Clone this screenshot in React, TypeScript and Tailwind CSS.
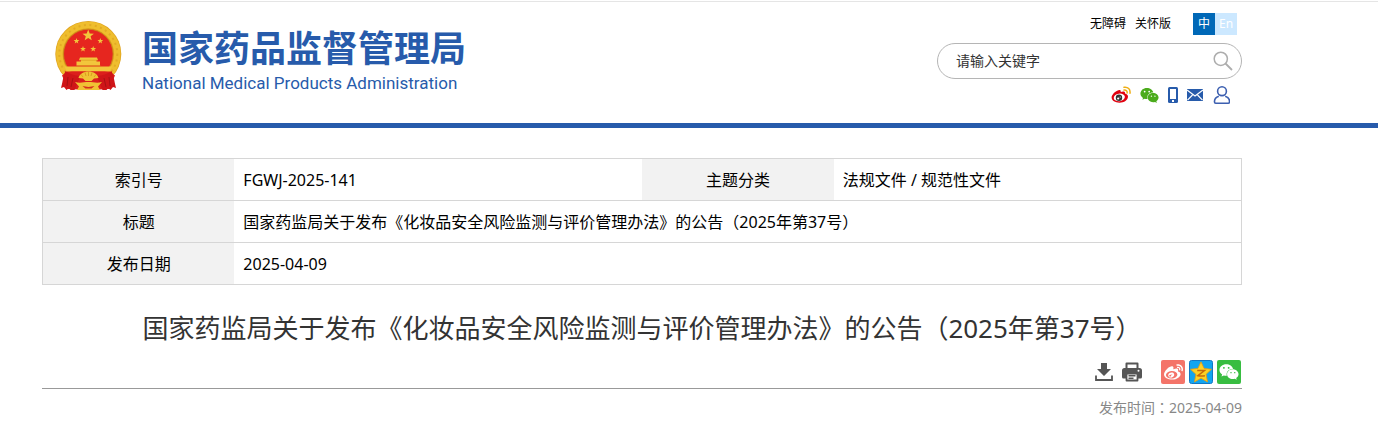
import { useState } from "react";
import { FaWeibo, FaWeixin } from "react-icons/fa";

const TITLE = "国家药监局关于发布《化妆品安全风险监测与评价管理办法》的公告（2025年第37号）";

function Star({ cx, cy, r }: { cx: number; cy: number; r: number }) {
  const points = Array.from({ length: 10 }, (_, i) => {
    const a = (Math.PI / 5) * i - Math.PI / 2;
    const d = i % 2 === 0 ? r : r * 0.42;
    return `${cx + d * Math.cos(a)},${cy + d * Math.sin(a)}`;
  }).join(" ");
  return <polygon points={points} />;
}

function Emblem() {
  return (
    <svg width="67" height="70" viewBox="0 0 67 70" className="shrink-0" aria-hidden="true">
      <circle cx="33.3" cy="33" r="33" fill="#dfa31f" />
      <circle cx="33.3" cy="33" r="29" fill="none" stroke="#efbe2e" strokeWidth="6.500" />
      <circle cx="33.3" cy="33" r="29" fill="none" stroke="#e3ab25" strokeWidth="2" strokeDasharray="2 3.500" />
      <circle cx="33.3" cy="33" r="24.800" fill="#e6261f" stroke="#c98a16" strokeWidth="0.800" />
      <g fill="#f2c63c">
        <Star cx={33.2} cy={14.5} r={6} />
        <Star cx={21.5} cy={20} r={3} />
        <Star cx={45.3} cy={20} r={3} />
        <Star cx={28} cy={28} r={3} />
        <Star cx={38.2} cy={28} r={3} />
        <path d="M25 36.500h17l1 2.500h-1.500v1.500H45v4H21.500v-4H26V39h-2z" />
        <path d="M9.500 45.500h47.500l-2.500 5H12z" />
      </g>
      <path d="M24 39.200h19M21.500 44.800h24" stroke="#d9951a" strokeWidth="0.600" />
      {/* drapes */}
      <path d="M12 50.500h43l5 4-6 13.500-20.500 1-20.500-1-6-13.500z" fill="#dc1f1c" />
      <path d="M10.500 50c4 3 9 4.500 15 5l-6 14h-4l-1.500-2-2.500 2L9 66l-3 1c1.500-5 2-12 4.500-17z" fill="#cf1518" />
      <path d="M56.500 50c-4 3-9 4.500-15 5l6 14h4l1.500-2 2.500 2 2.500-3 3 1c-1.500-5-2-12-4.500-17z" fill="#cf1518" />
      <path d="M13 56l-1 9M18 57l-2 9M54 56l1 9M49 57l2 9" stroke="#a31013" strokeWidth="0.900" />
      <path d="M23.500 57c1-4 5-6.500 10-6.500s9 2.500 10 6.500l-4.500.5-2.500 2.500h-6l-2.500-2.500z" fill="#f0c234" />
      <path d="M28 56l-2-2.500M31 55l-1-3.500M33.500 55v-4M36 55l1-3.500M39 56l2-2.500" stroke="#cf8d16" strokeWidth="0.700" />
      <path d="M20 61c5 1.500 9 0 13.500 0s8.500 1.500 13.500 0l-4 4.500 2 3.500H22l2-3.500z" fill="#f0c234" />
      <path d="M27.500 65l3 2.500h6l3-2.500-6 1z" fill="#d6301c" />
    </svg>
  );
}

function WeiboColor() {
  return (
    <svg width="20" height="18" viewBox="0 0 20 18" aria-hidden="true">
      <path
        d="M7.500 4.200C9 3.500 10.200 4.200 9.700 6c2.600-1 4.800-.6 4.300 1.500 1.900.5 3 1.600 3 3 0 3.500-3.900 6.200-8.500 6.200C4.100 16.700.6 14.600.6 11.500c0-2.600 3.300-6.200 6.900-7.300z"
        fill="#e1000f"
      />
      <ellipse cx="8.300" cy="11.400" rx="5.600" ry="3.800" fill="#fff" transform="rotate(-8 8.300 11.400)" />
      <circle cx="8" cy="11.700" r="3.200" fill="#333" />
      <circle cx="7.200" cy="12.500" r="1.100" fill="#fff" />
      <circle cx="9.200" cy="11" r="0.600" fill="#fff" />
      <path d="M13 1.300c4-.6 6.500 2 6 5.900M13 4.100c2.200-.3 3.400 1 3.100 2.800" fill="none" stroke="#efae13" strokeWidth="1.500" strokeLinecap="round" />
    </svg>
  );
}

function PhoneIcon() {
  return (
    <svg width="10" height="16" viewBox="0 0 10 16" aria-hidden="true">
      <rect width="10" height="16" rx="1.500" fill="#275bab" />
      <rect x="2" y="2" width="6" height="10" fill="#fff" />
      <rect x="4" y="13" width="2" height="2" fill="#fff" />
    </svg>
  );
}

function MailIcon() {
  return (
    <svg width="16" height="12" viewBox="0 0 16 12" aria-hidden="true">
      <rect width="16" height="12" fill="#275bab" />
      <path d="M0 1l8 6 8-6M.5 11.200L5.500 6M15.500 11.200L10.500 6" fill="none" stroke="#fff" strokeWidth="1.200" />
    </svg>
  );
}

function UserIcon() {
  return (
    <svg width="18" height="18" viewBox="0 0 18 18" fill="none" stroke="#3c5fb0" strokeWidth="1.600" aria-hidden="true">
      <circle cx="10" cy="5.200" r="4.400" />
      <path d="M6.800 10.200C4 11 2.300 13 2.500 16c0 .8.400 1.200 1.200 1.200h12.600c.8 0 1.200-.4 1.200-1.200.2-3-1.500-5-4.300-5.800" />
    </svg>
  );
}

function SearchIcon() {
  return (
    <svg width="20" height="20" viewBox="0 0 20 20" fill="none" stroke="#adadad" strokeWidth="1.500" aria-hidden="true">
      <circle cx="7.800" cy="7.800" r="6.600" />
      <path d="M12.500 12.500l6.500 6.500" strokeWidth="1.800" />
    </svg>
  );
}

function DownloadIcon() {
  return (
    <svg width="18" height="18" viewBox="0 0 18 18" aria-hidden="true">
      <path d="M6 0h6v6h4l-7 7-7-7h4z" fill="#555" />
      <path d="M1 12.500V17h16v-4.500" fill="none" stroke="#555" strokeWidth="1.800" />
    </svg>
  );
}

function PrintIcon() {
  return (
    <svg width="20" height="20" viewBox="0 0 20 20" aria-hidden="true">
      <path d="M4.500 6V1.500h11V6" fill="none" stroke="#555" strokeWidth="2" strokeLinejoin="round" />
      <path d="M2.500 6h15A2.500 2.500 0 0 1 20 8.500V15a1.500 1.500 0 0 1-1.500 1.500h-17A1.500 1.500 0 0 1 0 15V8.500A2.500 2.500 0 0 1 2.500 6z" fill="#555" />
      <circle cx="16.500" cy="8.800" r="1" fill="#fff" />
      <path d="M4.500 11.500h11v7h-11z" fill="#fff" stroke="#555" strokeWidth="1.800" strokeLinejoin="round" />
      <path d="M6.500 13.800h7M6.500 16.300h5" stroke="#555" strokeWidth="1.400" />
    </svg>
  );
}

function QzoneIcon() {
  return (
    <svg width="24" height="24" viewBox="0 0 24 24" aria-hidden="true">
      <rect x="0.5" y="0.5" width="23" height="23" rx="2" fill="#12a5f0" stroke="#1277c4" />
      <path
        d="M12 1.800l3.100 6.600 7.400.9-5.400 5 1.400 7.600-6.500-3.700-6.500 3.700 1.400-7.600-5.400-5 7.400-.9z"
        fill="#fdd225"
        stroke="#e89b10"
        strokeWidth="0.800"
        strokeLinejoin="round"
      />
      <path d="M8.200 10.500h7.300l-6.600 5.200c2.500.5 4.800.4 7 0" fill="none" stroke="#c96a0c" strokeWidth="1.500" />
    </svg>
  );
}

const socialLinks = [
  { label: "微博", icon: <WeiboColor /> },
  { label: "微信", icon: <FaWeixin size={19} color="#4bab1c" /> },
  { label: "移动客户端", icon: <PhoneIcon /> },
  { label: "邮箱", icon: <MailIcon /> },
  { label: "个人中心", icon: <UserIcon /> },
];

function Header() {
  const [keyword, setKeyword] = useState("");

  return (
    <header className="mt-px border-t border-b-5 border-t-[#e5e5e5] border-b-[#275bab]">
      <div className="mx-[42px] flex max-w-[1200px] justify-between">
        <a href="#" className="flex gap-5 pt-[19px] pl-[13px] text-[#275bab]">
          <Emblem />
          <span className="flex flex-col pt-1 whitespace-nowrap">
            <span className="text-[36px] leading-[48px] font-bold">国家药品监督管理局</span>
            <span className="font-['Roboto','Noto_Sans_CJK_SC',sans-serif] text-[17px] leading-5">
              National Medical Products Administration
            </span>
          </span>
        </a>

        <div className="flex w-[305px] shrink-0 flex-col pt-[11px] pb-[18px]">
          <div className="flex items-center justify-end pr-[5px] text-xs text-black">
            <a href="#" className="mr-[9px]">无障碍</a>
            <a href="#" className="mr-[22px]">关怀版</a>
            <button className="size-[22px] bg-[#0068b7] text-white">中</button>
            <button className="size-[22px] bg-[#cce8ff] text-white">En</button>
          </div>

          <form
            className="mt-2 flex h-9 items-center rounded-full border border-[#b5b5b5] pr-2 pl-[18px]"
            onSubmit={(e) => e.preventDefault()}
          >
            <input
              type="text"
              aria-label="请输入关键字"
              placeholder="请输入关键字"
              value={keyword}
              onChange={(e) => setKeyword(e.target.value)}
              className="min-w-0 flex-1 text-sm text-[#333] outline-none placeholder:text-[#333]"
            />
            <button type="submit" aria-label="搜索"><SearchIcon /></button>
          </form>

          <div className="mt-1.5 flex h-5 items-center justify-end gap-[9px] pr-3">
            {socialLinks.map((s) => (
              <a key={s.label} href="#" aria-label={s.label}>{s.icon}</a>
            ))}
          </div>
        </div>
      </div>
    </header>
  );
}

function InfoTable() {
  const th = "bg-[#f2f2f2] text-center font-normal";
  const td = "px-[9px]";
  const tr = "h-[42px] border-b border-[#d6d6d6]";

  return (
    <table className="w-full table-fixed border-collapse border border-[#d6d6d6] text-base text-black">
      <colgroup>
        <col className="w-[16%]" />
        <col className="w-[34%]" />
        <col className="w-[16%]" />
        <col className="w-[34%]" />
      </colgroup>
      <tbody>
        <tr className={tr}>
          <th scope="row" className={th}>索引号</th>
          <td className={td}>FGWJ-2025-141</td>
          <th scope="row" className={th}>主题分类</th>
          <td className={td}>法规文件 / 规范性文件</td>
        </tr>
        <tr className={tr}>
          <th scope="row" className={th}>标题</th>
          <td colSpan={3} className={td}>{TITLE}</td>
        </tr>
        <tr className={tr}>
          <th scope="row" className={th}>发布日期</th>
          <td colSpan={3} className={td}>2025-04-09</td>
        </tr>
      </tbody>
    </table>
  );
}

export default function App() {
  return (
    <div className="bg-white font-['Noto_Sans','Noto_Sans_CJK_SC',sans-serif]" lang="zh-CN">
      <Header />
      <main className="mx-[42px] max-w-[1200px] pt-[30px] pb-2">
        <InfoTable />
        <h1 className="mt-[23px] text-center text-[26px] leading-10 text-[#333]">{TITLE}</h1>

        <div className="mt-3 flex items-center justify-end gap-1 border-b border-[#999] pr-px pb-1">
          <button aria-label="下载" className="mr-[5px]"><DownloadIcon /></button>
          <button aria-label="打印" className="mr-[15px]"><PrintIcon /></button>
          <button aria-label="分享到微博" className="flex size-6 items-center justify-center rounded-xs bg-[#f47469]">
            <FaWeibo size={19} color="#fff" />
          </button>
          <button aria-label="分享到QQ空间"><QzoneIcon /></button>
          <button aria-label="分享到微信" className="flex size-6 items-center justify-center rounded-xs bg-[#38bd41]">
            <FaWeixin size={20} color="#fff" />
          </button>
        </div>

        <p className="mt-2 text-right text-sm text-[#888]">
          发布时间<span className="font-['Noto_Sans_CJK_TC',sans-serif]" lang="zh-TW">：</span>2025-04-09
        </p>
      </main>
    </div>
  );
}
